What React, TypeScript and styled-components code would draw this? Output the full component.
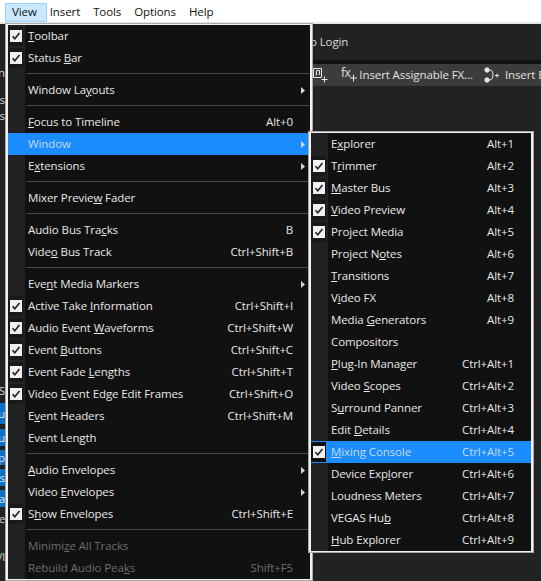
import React from 'react';
import styled, { createGlobalStyle } from 'styled-components';

const GlobalStyle = createGlobalStyle`
  html, body {
    margin: 0;
    padding: 0;
    background: #212121;
  }
  body {
    font-family: "Open Sans", "Liberation Sans", sans-serif;
    font-size: 11.5px;
    letter-spacing: -0.1px;
  }
`;

type MenuEntry = {
  label?: string; // & marks the underlined letter
  keys?: string;
  checked?: boolean;
  more?: boolean;
  active?: boolean;
  off?: boolean;
};

const viewItems: MenuEntry[] = [
  { label: '&Toolbar', checked: true },
  { label: 'Status &Bar', checked: true },
  {},
  { label: 'Window La&youts', more: true },
  {},
  { label: '&Focus to Timeline', keys: 'Alt+0' },
  { label: 'Window', more: true, active: true },
  { label: 'E&xtensions', more: true },
  {},
  { label: 'Mixer Previe&w Fader' },
  {},
  { label: 'Audio Bus Tra&cks', keys: 'B' },
  { label: 'Vide&o Bus Track', keys: 'Ctrl+Shift+B' },
  {},
  { label: 'Eve&nt Media Markers', more: true },
  { label: 'Active Take &Information', keys: 'Ctrl+Shift+I', checked: true },
  { label: 'Audio Event &Waveforms', keys: 'Ctrl+Shift+W', checked: true },
  { label: 'Event &Buttons', keys: 'Ctrl+Shift+C', checked: true },
  { label: 'Event Fade &Lengths', keys: 'Ctrl+Shift+T', checked: true },
  { label: 'Video &Event Edge Edit Frames', keys: 'Ctrl+Shift+O', checked: true },
  { label: 'E&vent Headers', keys: 'Ctrl+Shift+M' },
  { label: 'Event Length' },
  {},
  { label: '&Audio Envelopes', more: true },
  { label: 'Video &Envelopes', more: true },
  { label: 'S&how Envelopes', keys: 'Ctrl+Shift+E', checked: true },
  {},
  { label: 'Minimi&ze All Tracks', off: true },
  { label: 'Rebuild Audio Pea&ks', keys: 'Shift+F5', off: true },
];

const windowItems: MenuEntry[] = [
  { label: 'E&xplorer', keys: 'Alt+1' },
  { label: 'T&rimmer', keys: 'Alt+2', checked: true },
  { label: '&Master Bus', keys: 'Alt+3', checked: true },
  { label: '&Video Preview', keys: 'Alt+4', checked: true },
  { label: 'Project Media', keys: 'Alt+5', checked: true },
  { label: 'Project N&otes', keys: 'Alt+6' },
  { label: '&Transitions', keys: 'Alt+7' },
  { label: 'V&ideo FX', keys: 'Alt+8' },
  { label: 'Media &Generators', keys: 'Alt+9' },
  { label: 'Compositors' },
  { label: '&Plug-In Manager', keys: 'Ctrl+Alt+1' },
  { label: 'Video &Scopes', keys: 'Ctrl+Alt+2' },
  { label: 'S&urround Panner', keys: 'Ctrl+Alt+3' },
  { label: 'Edit &Details', keys: 'Ctrl+Alt+4' },
  { label: '&Mixing Console', keys: 'Ctrl+Alt+5', checked: true, active: true },
  { label: 'Device Exp&lorer', keys: 'Ctrl+Alt+6' },
  { label: 'Loudness Meters', keys: 'Ctrl+Alt+7' },
  { label: 'VEGAS Hu&b', keys: 'Ctrl+Alt+8' },
  { label: '&Hub Explorer', keys: 'Ctrl+Alt+9' },
];

const Screen = styled.div`
  position: relative;
  display: flex;
  flex-direction: column;
  width: 541px;
  height: 581px;
  overflow: hidden;
  background: #222222;
  color: #e6e6e6;
`;

const MenuBar = styled.div`
  display: flex;
  flex: none;
  height: 24px;
  padding: 3px 0 0 5px;
  box-sizing: border-box;
  background: #ffffff;
  color: #111111;
  border-bottom: 2px solid #e6e6e6;
`;

const BarItem = styled.div<{ $open?: boolean }>`
  height: 19px;
  margin-right: ${(p) => (p.$open ? '0' : '7px')};
  padding: 0 ${(p) => (p.$open ? '10px 0 7px' : '3px')};
  line-height: 18px;
  box-sizing: border-box;
  background: ${(p) => (p.$open ? '#cce8ff' : 'transparent')};
  box-shadow: ${(p) => (p.$open ? 'inset 0 0 0 1px #99d1ff' : 'none')};
`;

const Workspace = styled.div`
  display: flex;
  flex: 1;
  min-height: 0;
`;

const SidePanel = styled.div`
  flex: none;
  width: 5px;
  display: flex;
  flex-direction: column;
  overflow: hidden;
`;

const SideText = styled.div<{ $gap: number }>`
  display: flex;
  justify-content: flex-end;
  height: 16px;
  margin-top: ${(p) => p.$gap}px;
  line-height: 16px;
  white-space: nowrap;
  color: #d4d4d4;
`;

const SideChip = styled.div<{ $gap: number; $h: number }>`
  display: flex;
  justify-content: flex-end;
  align-items: center;
  height: ${(p) => p.$h}px;
  margin-top: ${(p) => p.$gap}px;
  background: #0a70c8;
  color: #d8e8f8;
  white-space: nowrap;
`;

const MainPanel = styled.div`
  flex: 1;
  display: flex;
  flex-direction: column;
  min-width: 0;
  overflow: hidden;
`;

const TitleRow = styled.div`
  flex: none;
  height: 36px;
  padding-left: 305px;
  line-height: 36px;
  background: #222222;
  border-bottom: 4px solid #111111;
  white-space: nowrap;
  color: #dcdcdc;
`;

const ToolStrip = styled.div`
  display: flex;
  flex: none;
  align-items: center;
  height: 21px;
  padding: 0 0 1px 308px;
  background: #3c3c3c;
  white-space: nowrap;
  color: #e2e2e2;
`;

const ToolButton = styled.span<{ $gap: number }>`
  display: inline-flex;
  flex: none;
  align-items: center;
  gap: 5px;
  margin-right: ${(p) => p.$gap}px;
`;

const FxMark = styled.span`
  display: inline-flex;
  align-items: flex-start;
  margin-right: -4px;
  font-size: 12px;
  line-height: 12px;
  letter-spacing: -0.5px;
`;

const Menu = styled.div<{ $x: number; $y: number; $w: number }>`
  position: absolute;
  left: ${(p) => p.$x}px;
  top: ${(p) => p.$y}px;
  width: ${(p) => p.$w}px;
  box-sizing: border-box;
  border-style: solid;
  border-color: #f2f2f2;
  border-width: 2px 3px;
  outline: 1px solid #a8a8a8;
  outline-offset: -1px;
  background-color: #111111;
  background-image: linear-gradient(#222222, #222222);
  background-repeat: no-repeat;
  background-size: 17px 100%;
`;

const Row = styled.div<{ $active?: boolean; $off?: boolean }>`
  display: flex;
  align-items: center;
  height: 22px;
  background: ${(p) => (p.$active ? '#1a8cff' : 'transparent')};
  color: ${(p) => (p.$off ? '#6d6d6d' : p.$active ? '#c4dcf5' : '#e8e8e8')};
  white-space: nowrap;
`;

const CheckSlot = styled.div<{ $on?: boolean; $active?: boolean }>`
  flex: none;
  width: 15px;
  height: 20px;
  margin: 0 5px 0 0;
  display: flex;
  align-items: center;
  justify-content: center;
  padding-left: 1px;
  box-sizing: border-box;
  background: ${(p) => (p.$on ? (p.$active ? '#111111' : '#191919') : 'transparent')};
`;

const CheckBox = styled.svg`
  display: block;
  width: 12px;
  height: 12px;
`;

const Label = styled.span`
  flex: 1;
  margin-top: -2px;
`;

const Keys = styled.span`
  margin: -2px 17px 0 0;
`;

const Arrow = styled.svg`
  display: block;
  flex: none;
  width: 4px;
  height: 7px;
  margin-right: 5px;
`;

const Divider = styled.div`
  height: 1px;
  margin: 4px 0 5px 18px;
  background: #4a4a4a;
`;

const renderLabel = (label: string) => {
  const at = label.indexOf('&');
  if (at < 0) return label;
  return (
    <>
      {label.slice(0, at)}
      <u>{label[at + 1]}</u>
      {label.slice(at + 2)}
    </>
  );
};

function MenuRows({ items }: { items: MenuEntry[] }) {
  return (
    <>
      {items.map((item, i) =>
        !item.label ? (
          <Divider key={i} />
        ) : (
          <Row key={i} $active={item.active} $off={item.off}>
            <CheckSlot $on={item.checked} $active={item.active}>
              {item.checked && (
                <CheckBox viewBox="0 0 12 12">
                  <rect width="12" height="12" fill="#f0f0f0" />
                  <path d="M2.5 6.2 L4.8 8.8 L9.5 3" fill="none" stroke="#222" strokeWidth="1.6" />
                </CheckBox>
              )}
            </CheckSlot>
            <Label>{renderLabel(item.label)}</Label>
            {item.keys && <Keys>{item.keys}</Keys>}
            {item.more && (
              <Arrow viewBox="0 0 4 7">
                <path d="M0 0 L4 3.5 L0 7 Z" fill="#d8d8d8" />
              </Arrow>
            )}
          </Row>
        ),
      )}
    </>
  );
}

export default function App() {
  return (
    <>
      <GlobalStyle />
      <Screen>
        <MenuBar>
          <BarItem $open>View</BarItem>
          <BarItem>Insert</BarItem>
          <BarItem>Tools</BarItem>
          <BarItem>Options</BarItem>
          <BarItem>Help</BarItem>
        </MenuBar>
        <Workspace>
          <SidePanel>
            <SideText $gap={41}>n</SideText>
            <SideText $gap={11}>s</SideText>
            <SideText $gap={0}>s</SideText>
            <SideText $gap={259}>S</SideText>
            <SideChip $gap={4} $h={21}>u</SideChip>
            <SideChip $gap={5} $h={17}>u</SideChip>
            <SideChip $gap={4} $h={15}>p</SideChip>
            <SideChip $gap={4} $h={17}>s</SideChip>
            <SideChip $gap={4} $h={17}>Ma</SideChip>
            <SideText $gap={4}>re</SideText>
            <SideText $gap={22}>Vl</SideText>
          </SidePanel>
          <MainPanel>
            <TitleRow>o Login</TitleRow>
            <ToolStrip>
              <ToolButton $gap={12}>
                <svg width="16" height="16" viewBox="0 0 16 16" fill="none" stroke="#e6e6e6">
                  <path d="M0.500 1.500h8v9h-8z" />
                  <path d="M3.500 8V3.500h3v4 M3.500 8h-1 M6.500 7.500h-1" />
                  <path d="M11.500 9.500v6 M8.500 12.500h6" />
                </svg>
              </ToolButton>
              <ToolButton $gap={11}>
                <FxMark>
                  fx
                  <svg width="8" height="16" viewBox="0 0 8 16" fill="none" stroke="#e6e6e6">
                    <path d="M3.500 7.500v7 M0 11h7" />
                  </svg>
                </FxMark>
                Insert Assignable FX...
              </ToolButton>
              <ToolButton $gap={0}>
                <svg width="16" height="16" viewBox="0 0 16 16" fill="none" stroke="#e6e6e6">
                  <circle cx="3" cy="3" r="2.200" fill="#e6e6e6" />
                  <circle cx="3" cy="13" r="2.200" fill="#e6e6e6" />
                  <path d="M5 3c3 0 4 2 4 5s-1 5-4 5 M11 8.500h4 M13 6.500v4" />
                </svg>
                Insert Bus
              </ToolButton>
            </ToolStrip>
          </MainPanel>
        </Workspace>
        <Menu $x={5} $y={23} $w={308}>
          <MenuRows items={viewItems} />
        </Menu>
        <Menu $x={308} $y={131} $w={226}>
          <MenuRows items={windowItems} />
        </Menu>
      </Screen>
    </>
  );
}
